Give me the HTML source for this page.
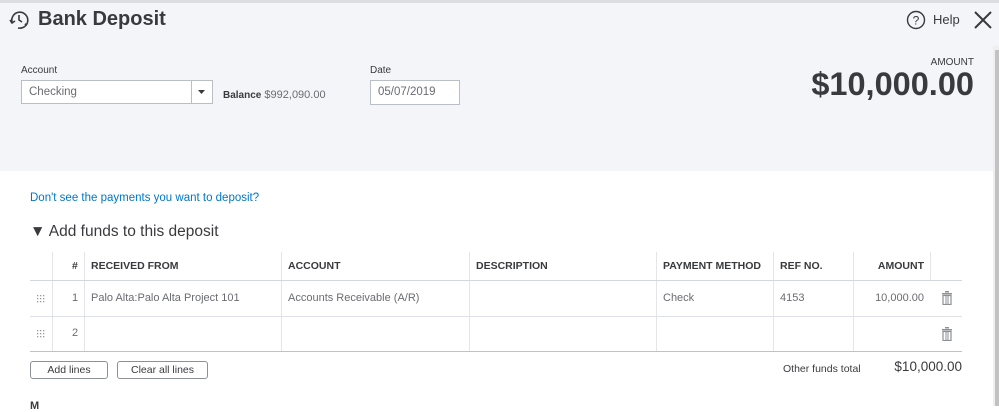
<!DOCTYPE html>
<html><head><meta charset="utf-8"><style>
*{margin:0;padding:0;box-sizing:border-box}
body{width:999px;height:406px;overflow:hidden;background:#fff;font-family:"Liberation Sans",sans-serif;color:#393a3d;position:relative}
.hdr{position:absolute;left:0;top:0;width:999px;height:171px;background:#f4f5f8;border-top:3px solid #dcdde0}
.abs{position:absolute}
.lbl{font-size:10px;color:#393a3d}
.in{position:absolute;background:#fff;border:1px solid #babec5;font-size:11.5px;color:#6b6c72;padding-left:7px;line-height:22px}
.th{position:absolute;top:252px;height:28px;line-height:28px;font-size:10.5px;font-weight:bold;color:#393a3d}
.td{position:absolute;font-size:11px;color:#6b6c72}
.vl{position:absolute;top:252px;width:1px;height:99px;background:#e3e5e8}
.hl{position:absolute;left:30px;width:932px;height:1px;background:#dfe1e5}
.btn{position:absolute;top:361px;height:18px;border:1px solid #8d9096;border-radius:3px;background:#fff;font-size:10.5px;text-align:center;line-height:16px;color:#393a3d}
</style></head><body>
<div class="hdr"></div>
<svg class="abs" style="left:8px;top:9px" width="22" height="22" viewBox="0 0 22 22" fill="none" stroke="#393a3d" stroke-width="1.6"><path d="M4 13 A8 8 0 1 1 10 19" /><path d="M2 11 l2 3 l3 -2"/><path d="M11 6 v5 l3 2"/><path d="M13 19 l1 -0.5 M17 16 l1 -1.5" stroke-width="1.4"/></svg>
<div class="abs" style="left:38px;top:8px;font-size:20px;font-weight:bold;color:#393a3d">Bank Deposit</div>
<svg class="abs" style="left:906px;top:10px" width="20" height="20" viewBox="0 0 20 20"><circle cx="10" cy="10" r="8.5" fill="none" stroke="#393a3d" stroke-width="1.4"/><text x="10" y="14.5" font-size="12" text-anchor="middle" font-family="Liberation Sans" fill="#393a3d">?</text></svg>
<div class="abs" style="left:933px;top:12px;font-size:13px;color:#393a3d">Help</div>
<svg class="abs" style="left:973px;top:10px" width="20" height="20" viewBox="0 0 20 20"><path d="M2 2L18 18M18 2L2 18" stroke="#393a3d" stroke-width="2"/></svg>
<div class="abs lbl" style="left:21px;top:65px">Account</div>
<div class="in" style="left:21px;top:80px;width:171px;height:24px">Checking</div>
<div class="in" style="left:191px;top:80px;width:22px;height:24px;padding:0"><svg width="20" height="22"><path d="M6 9h7l-3.5 4z" fill="#393a3d"/></svg></div>
<div class="abs" style="left:223px;top:89px;font-size:11px;color:#6b6c72"><b style="color:#393a3d;font-size:10px">Balance</b> $992,090.00</div>
<div class="abs lbl" style="left:370px;top:65px">Date</div>
<div class="in" style="left:370px;top:80px;width:90px;height:25px">05/07/2019</div>
<div class="abs" style="right:25px;top:57px;font-size:10px;color:#393a3d">AMOUNT</div>
<div class="abs" style="right:25px;top:66px;font-size:32.5px;font-weight:bold;color:#393a3d">$10,000.00</div>
<div class="abs" style="left:30px;top:192px;font-size:11.5px;color:#0077c5">Don't see the payments you want to deposit?</div>
<div class="abs" style="left:30px;top:223px;font-size:15.5px;color:#393a3d">▼ Add funds to this deposit</div>
<div class="vl" style="left:52px"></div><div class="vl" style="left:84px"></div><div class="vl" style="left:281px"></div><div class="vl" style="left:469px"></div><div class="vl" style="left:656px"></div><div class="vl" style="left:773px"></div><div class="vl" style="left:853px"></div><div class="vl" style="left:930px;height:28px"></div>
<div class="hl" style="top:280px;background:#d4d7dc"></div>
<div class="hl" style="top:316px"></div>
<div class="hl" style="top:351px;background:#bfc2c7"></div>
<div class="th" style="left:72px">#</div>
<div class="th" style="left:91px">RECEIVED FROM</div>
<div class="th" style="left:288px">ACCOUNT</div>
<div class="th" style="left:476px">DESCRIPTION</div>
<div class="th" style="left:663px">PAYMENT METHOD</div>
<div class="th" style="left:780px">REF NO.</div>
<div class="th" style="right:75px">AMOUNT</div>
<svg class="abs" style="left:37px;top:295px" width="8" height="8" fill="#9a9a9a"><rect x="0" y="0" width="1.3" height="1.3"/><rect x="3" y="0" width="1.3" height="1.3"/><rect x="6" y="0" width="1.3" height="1.3"/><rect x="0" y="3" width="1.3" height="1.3"/><rect x="3" y="3" width="1.3" height="1.3"/><rect x="6" y="3" width="1.3" height="1.3"/><rect x="0" y="6" width="1.3" height="1.3"/><rect x="3" y="6" width="1.3" height="1.3"/><rect x="6" y="6" width="1.3" height="1.3"/></svg>
<svg class="abs" style="left:37px;top:330px" width="8" height="8" fill="#9a9a9a"><rect x="0" y="0" width="1.3" height="1.3"/><rect x="3" y="0" width="1.3" height="1.3"/><rect x="6" y="0" width="1.3" height="1.3"/><rect x="0" y="3" width="1.3" height="1.3"/><rect x="3" y="3" width="1.3" height="1.3"/><rect x="6" y="3" width="1.3" height="1.3"/><rect x="0" y="6" width="1.3" height="1.3"/><rect x="3" y="6" width="1.3" height="1.3"/><rect x="6" y="6" width="1.3" height="1.3"/></svg>
<div class="td" style="left:72px;top:292px">1</div>
<div class="td" style="left:91px;top:292px">Palo Alta:Palo Alta Project 101</div>
<div class="td" style="left:288px;top:292px">Accounts Receivable (A/R)</div>
<div class="td" style="left:663px;top:292px">Check</div>
<div class="td" style="left:780px;top:292px">4153</div>
<div class="td" style="right:75px;top:292px">10,000.00</div>
<div class="td" style="left:72px;top:327px">2</div>
<svg class="abs" style="left:941px;top:291px" width="12" height="14" viewBox="0 0 12 14" fill="#8d9096"><rect x="4" y="0" width="4" height="1.5"/><rect x="1" y="2" width="10" height="1.5"/><rect x="2" y="4.5" width="8" height="9" fill="none" stroke="#8d9096" stroke-width="1.2"/><rect x="4.5" y="5" width="1" height="8"/><rect x="6.5" y="5" width="1" height="8"/></svg>
<svg class="abs" style="left:941px;top:327px" width="12" height="14" viewBox="0 0 12 14" fill="#8d9096"><rect x="4" y="0" width="4" height="1.5"/><rect x="1" y="2" width="10" height="1.5"/><rect x="2" y="4.5" width="8" height="9" fill="none" stroke="#8d9096" stroke-width="1.2"/><rect x="4.5" y="5" width="1" height="8"/><rect x="6.5" y="5" width="1" height="8"/></svg>
<div class="btn" style="left:30px;width:78px">Add lines</div>
<div class="btn" style="left:117px;width:91px">Clear all lines</div>
<div class="abs" style="left:783px;top:363px;font-size:10.5px;color:#393a3d">Other funds total</div>
<div class="abs" style="right:37px;top:359px;font-size:13.5px;color:#393a3d">$10,000.00</div>
<div class="abs" style="left:30px;top:400px;font-size:11px;font-weight:bold">M</div>
<div class="abs" style="left:993px;top:46px;width:6px;height:360px;background:#efefef"></div>
<div class="abs" style="left:995px;top:50px;width:4px;height:356px;background:#c2c2c2"></div>
</body></html>
